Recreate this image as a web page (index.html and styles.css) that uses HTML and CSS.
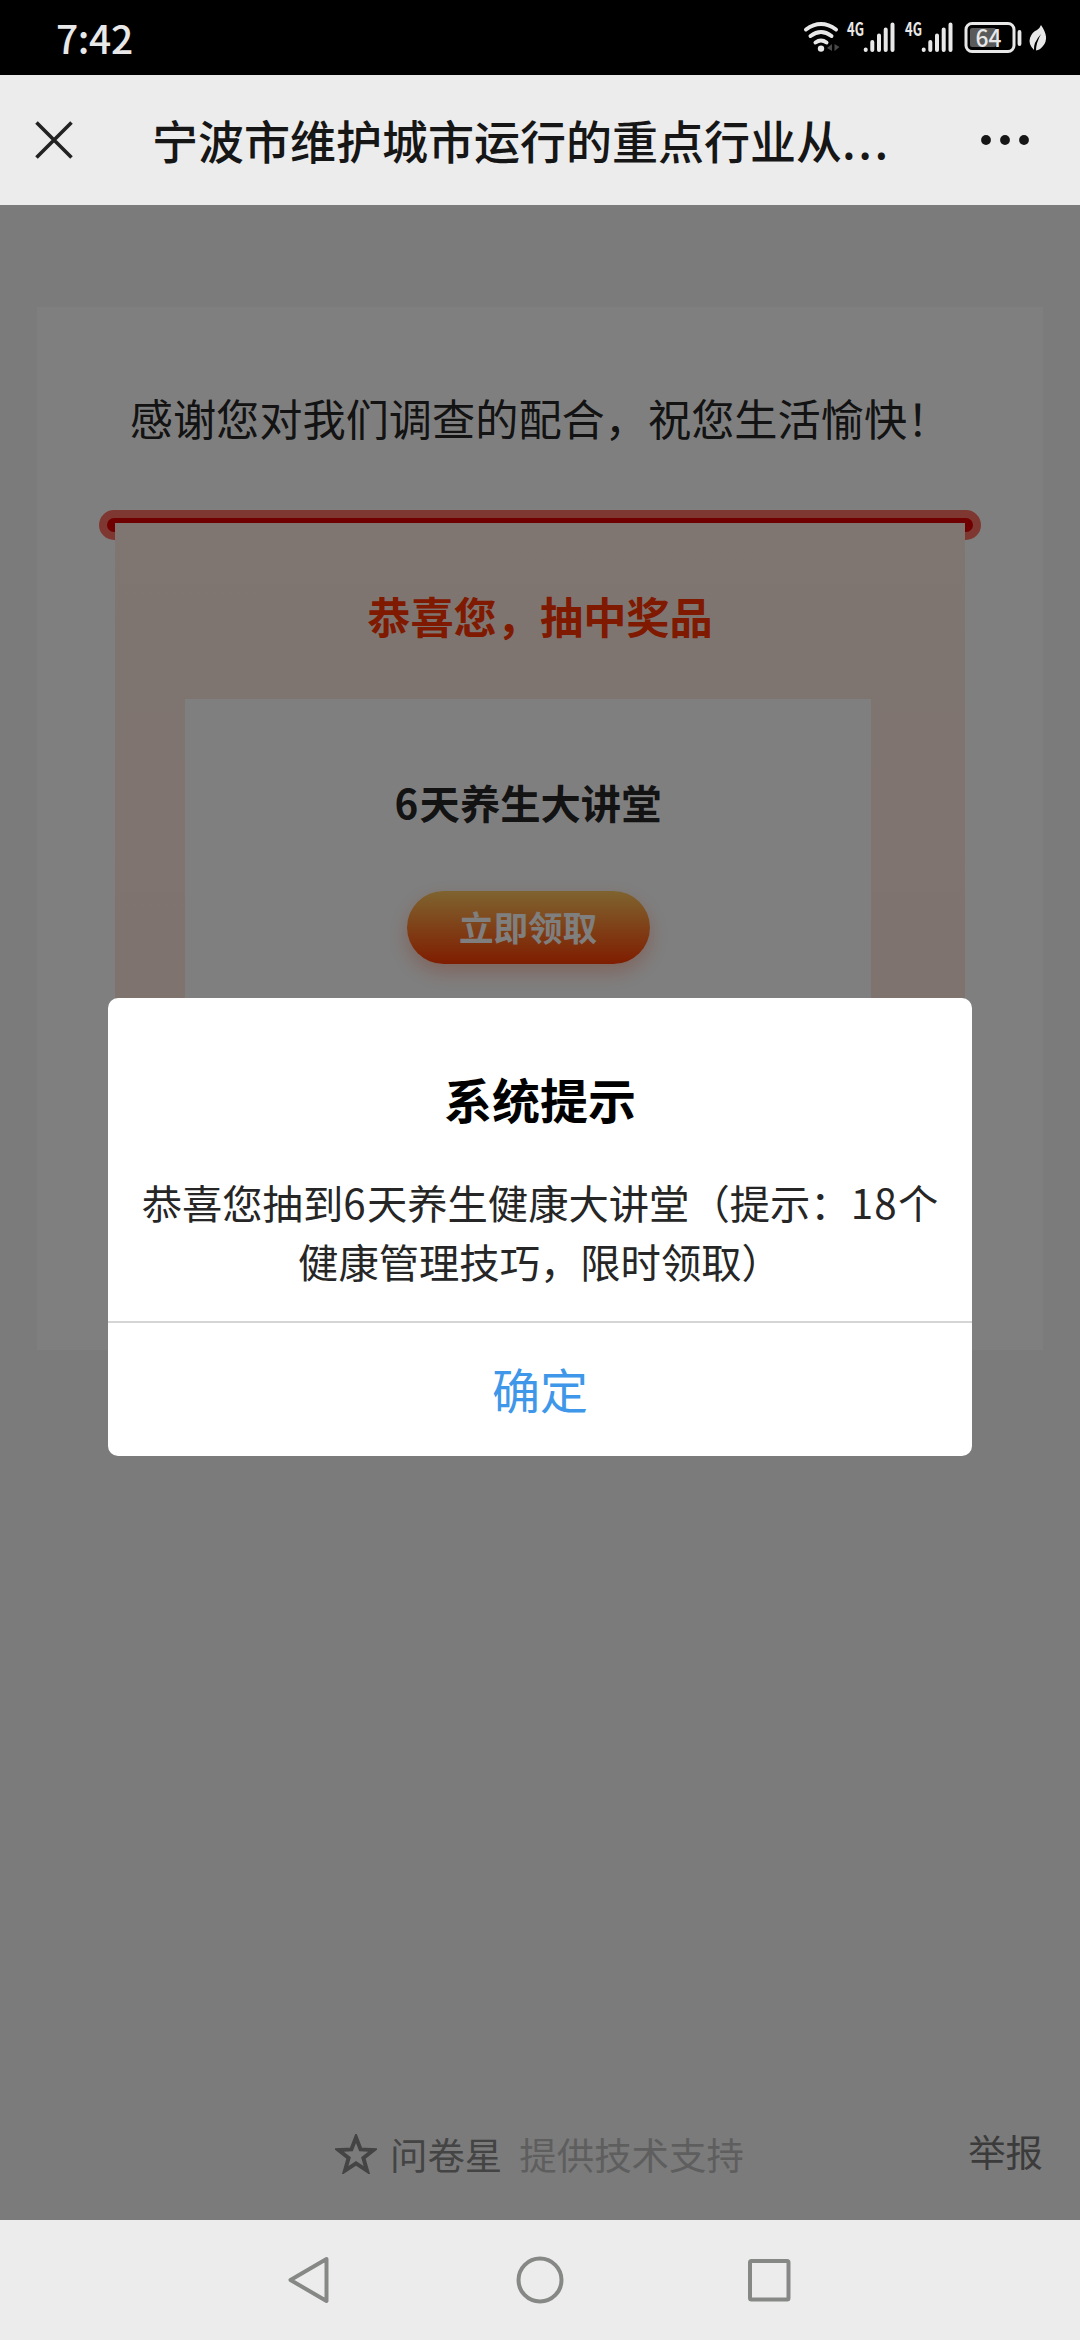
FILE: index.html
```html
<!DOCTYPE html>
<html lang="zh-CN">
<head>
<meta charset="utf-8">
<title>问卷星</title>
<link rel="stylesheet" href="styles.css">
</head>
<body>
<div class="screen">
  <header class="status">
    <span class="clock">7:42</span>
    <svg class="status-icons" width="250" height="40" viewBox="800 16 250 40">
      <g fill="none" stroke="#e8e8e8" stroke-width="4" stroke-linecap="round">
        <path d="M806 29.500Q821 18.500 836 29.500M810.500 36Q821 28 831.500 36M815.500 42.500Q821 38.500 826.500 42.500"/>
        <path d="M865.700 49.500v.5M872.300 42v8M879 35.500V50M885.700 29.500V50M892.500 24.500V50"/>
        <path d="M923.700 49.500v.5M930.300 42v8M937 35.500V50M943.700 29.500V50M950.500 24.500V50"/>
        <path d="M1019.500 32v12" stroke-width="3.800"/>
        <rect x="966" y="23.500" width="48" height="28" rx="6" stroke-width="3"/>
      </g>
      <circle cx="821" cy="48.600" r="3.200" fill="#e8e8e8"/>
      <path d="M827 48l5-4v7zM834.500 44v7l5-4z" fill="#484848"/>
      <rect x="970" y="28" width="26" height="19" rx="2" fill="#5a5a5a"/>
      <path d="M1041 25Q1050 38 1043 46Q1040 50 1036 50.500Q1036 43 1041 34Q1033 43 1034 50Q1028 44 1030 38Q1032 32 1037 30Q1040 28 1041 25Z" fill="#e8e8e8"/>
      <g class="status-text">
        <text x="847" y="36" font-size="18.500" textLength="17" lengthAdjust="spacingAndGlyphs">4G</text>
        <text x="905" y="36" font-size="18.500" textLength="17" lengthAdjust="spacingAndGlyphs">4G</text>
        <text class="level" x="975.500" y="46.500" font-size="24.500" textLength="26" lengthAdjust="spacingAndGlyphs">64</text>
      </g>
    </svg>
  </header>

  <nav class="titlebar">
    <svg class="close" width="38" height="38" viewBox="0 0 38 38"><path d="M1.500 1.500l35 35M36.500 1.500l-35 35" stroke="#222" stroke-width="3.600"/></svg>
    <h1 class="title">宁波市维护城市运行的重点行业从<span class="dots">...</span></h1>
    <svg class="more" width="50" height="12" viewBox="0 0 50 12" fill="#161616"><circle cx="6" cy="6" r="4.900"/><circle cx="25" cy="6" r="4.900"/><circle cx="44" cy="6" r="4.900"/></svg>
  </nav>

  <main class="page">
    <section class="card">
      <p class="thanks">感谢您对我们调查的配合，祝您生活愉快！</p>
      <div class="slot">
        <div class="ticket">
          <h2 class="congrats">恭喜您，抽中奖品</h2>
          <div class="prize">
            <h3 class="prize-name"><span class="digit">6</span>天养生大讲堂</h3>
            <button class="claim">立即领取</button>
          </div>
        </div>
      </div>
    </section>
    <footer class="footer">
      <svg class="star" width="42" height="40" viewBox="0 0 42 40"><path d="M21 3.500L25.600 15.400L38.500 16L28.400 24L32 36.600L21 29.400L10 36.600L13.600 24L3.500 16L16.400 15.400Z" fill="none" stroke="#888" stroke-width="4"/></svg>
      <span class="brand">问卷星</span>
      <span class="support">提供技术支持</span>
      <span class="report">举报</span>
    </footer>
    <div class="overlay">
      <div class="dialog">
        <div class="dialog-body">
          <h2 class="dialog-title">系统提示</h2>
          <p class="dialog-text">恭喜您抽到<span class="digit">6</span>天养生健康大讲堂（提示：<span class="digit">18</span>个<br>健康管理技巧，限时领取）</p>
        </div>
        <button class="confirm">确定</button>
      </div>
    </div>
  </main>

  <nav class="softkeys">
    <svg width="48" height="48" viewBox="0 0 48 48"><path d="M39.500 3L3.500 24L39.500 45Z"/></svg>
    <svg width="48" height="48" viewBox="0 0 48 48"><circle cx="24" cy="24" r="21.500"/></svg>
    <svg width="48" height="48" viewBox="0 0 48 48"><rect x="5" y="5" width="38.500" height="38.500" rx="1.500"/></svg>
  </nav>
</div>
</body>
</html>
```
FILE: styles.css
```css
* { box-sizing: border-box; }
body, h1, h2, h3, p { margin: 0; }
body {
  font-family: "Noto Sans CJK SC", sans-serif;
  text-spacing-trim: space-all;
}
button { border: 0; padding: 0; font-family: inherit; }
svg { display: block; flex: none; }

.screen {
  width: 1080px;
  height: 2340px;
  display: flex;
  flex-direction: column;
  overflow: hidden;
}

.status {
  height: 75px;
  background: #000;
  color: #e8e8e8;
  display: flex;
  align-items: center;
  justify-content: space-between;
  padding: 0 30px 3px 56px;
}
.clock { font-size: 39px; font-weight: 500; line-height: 60px; padding-top: 2px; letter-spacing: -.4px; }
.status-text { fill: #e8e8e8; font-weight: 700; }
.level { font-weight: 500; }

.titlebar {
  height: 130px;
  background: #ececec;
  display: flex;
  align-items: center;
  padding: 0 50px 0 35px;
}
.title {
  margin-left: 79px;
  flex: 1;
  padding-bottom: 3px;
  font-size: 46px;
  line-height: 66px;
  font-weight: 500;
  color: #161616;
  white-space: nowrap;
}
.dots { letter-spacing: 2.600px; }

.page {
  position: relative;
  height: 2015px;
  background: #f7f7f7;
  display: flex;
  flex-direction: column;
  justify-content: space-between;
  padding: 102px 37px 0;
}
.card {
  height: 1043px;
  background: #fff;
  padding: 78px 62px 0;
}
.thanks {
  font-size: 43.200px;
  line-height: 64px;
  color: #262626;
  text-align: center;
  white-space: nowrap;
}
.slot {
  margin-top: 61px;
  height: 30px;
  border: 8px solid #ff7062;
  border-radius: 15px;
  background: #e00000;
  padding: 5px 8px 0;
}
.ticket {
  height: 640px;
  background: linear-gradient(#ffece2, #ffe4dc);
  padding: 60px 70px 0;
  text-align: center;
}
.congrats { font-size: 43.200px; line-height: 64px; font-weight: 700; color: #ff3200; }
.prize {
  margin: 52px 24px 0 0;
  height: 420px;
  background: #fff;
  display: flex;
  flex-direction: column;
  align-items: center;
}
.prize-name { margin-top: 73px; font-size: 40.320px; line-height: 60px; color: #262626; }
.claim {
  margin-top: 59px;
  width: 243px;
  height: 73px;
  padding-bottom: 4px;
  border-radius: 37px;
  background: linear-gradient(#ffc860, #ff3a00);
  box-shadow: 0 8px 20px rgba(255, 70, 20, .3);
  color: #fff;
  font-size: 34.560px;
  font-weight: 700;
}
.digit { letter-spacing: 1.300px; }

.footer {
  display: flex;
  align-items: center;
  height: 60px;
  margin-bottom: 36px;
  padding-left: 298px;
  font-size: 37.440px;
  line-height: 56px;
}
.brand { margin-left: 13px; color: #888; }
.support { margin-left: 17px; color: #bdbdbd; }
.report { margin-left: auto; margin-bottom: 6px; color: #777; }

.overlay {
  position: absolute;
  inset: 0;
  background: rgba(0, 0, 0, .5);
  padding: 793px 108px 0;
}
.dialog {
  height: 458px;
  border-radius: 10px;
  background: #fff;
  text-align: center;
  overflow: hidden;
}
.dialog-body { height: 325px; padding-top: 65px; border-bottom: 2px solid #d5d5d5; }
.dialog-title { font-size: 48px; line-height: 70px; color: #000; }
.dialog-text {
  margin-top: 39px;
  font-size: 40.320px;
  line-height: 59px;
  color: #262626;
  white-space: nowrap;
}
.confirm {
  width: 100%;
  height: 133px;
  padding-bottom: 4px;
  background: none;
  color: #3e97e8;
  font-size: 48px;
}

.softkeys {
  height: 120px;
  background: #ececec;
  display: flex;
  align-items: center;
  justify-content: center;
  gap: 181px;
}
.softkeys svg { fill: none; stroke: #868886; stroke-width: 4; stroke-linejoin: round; }
```
